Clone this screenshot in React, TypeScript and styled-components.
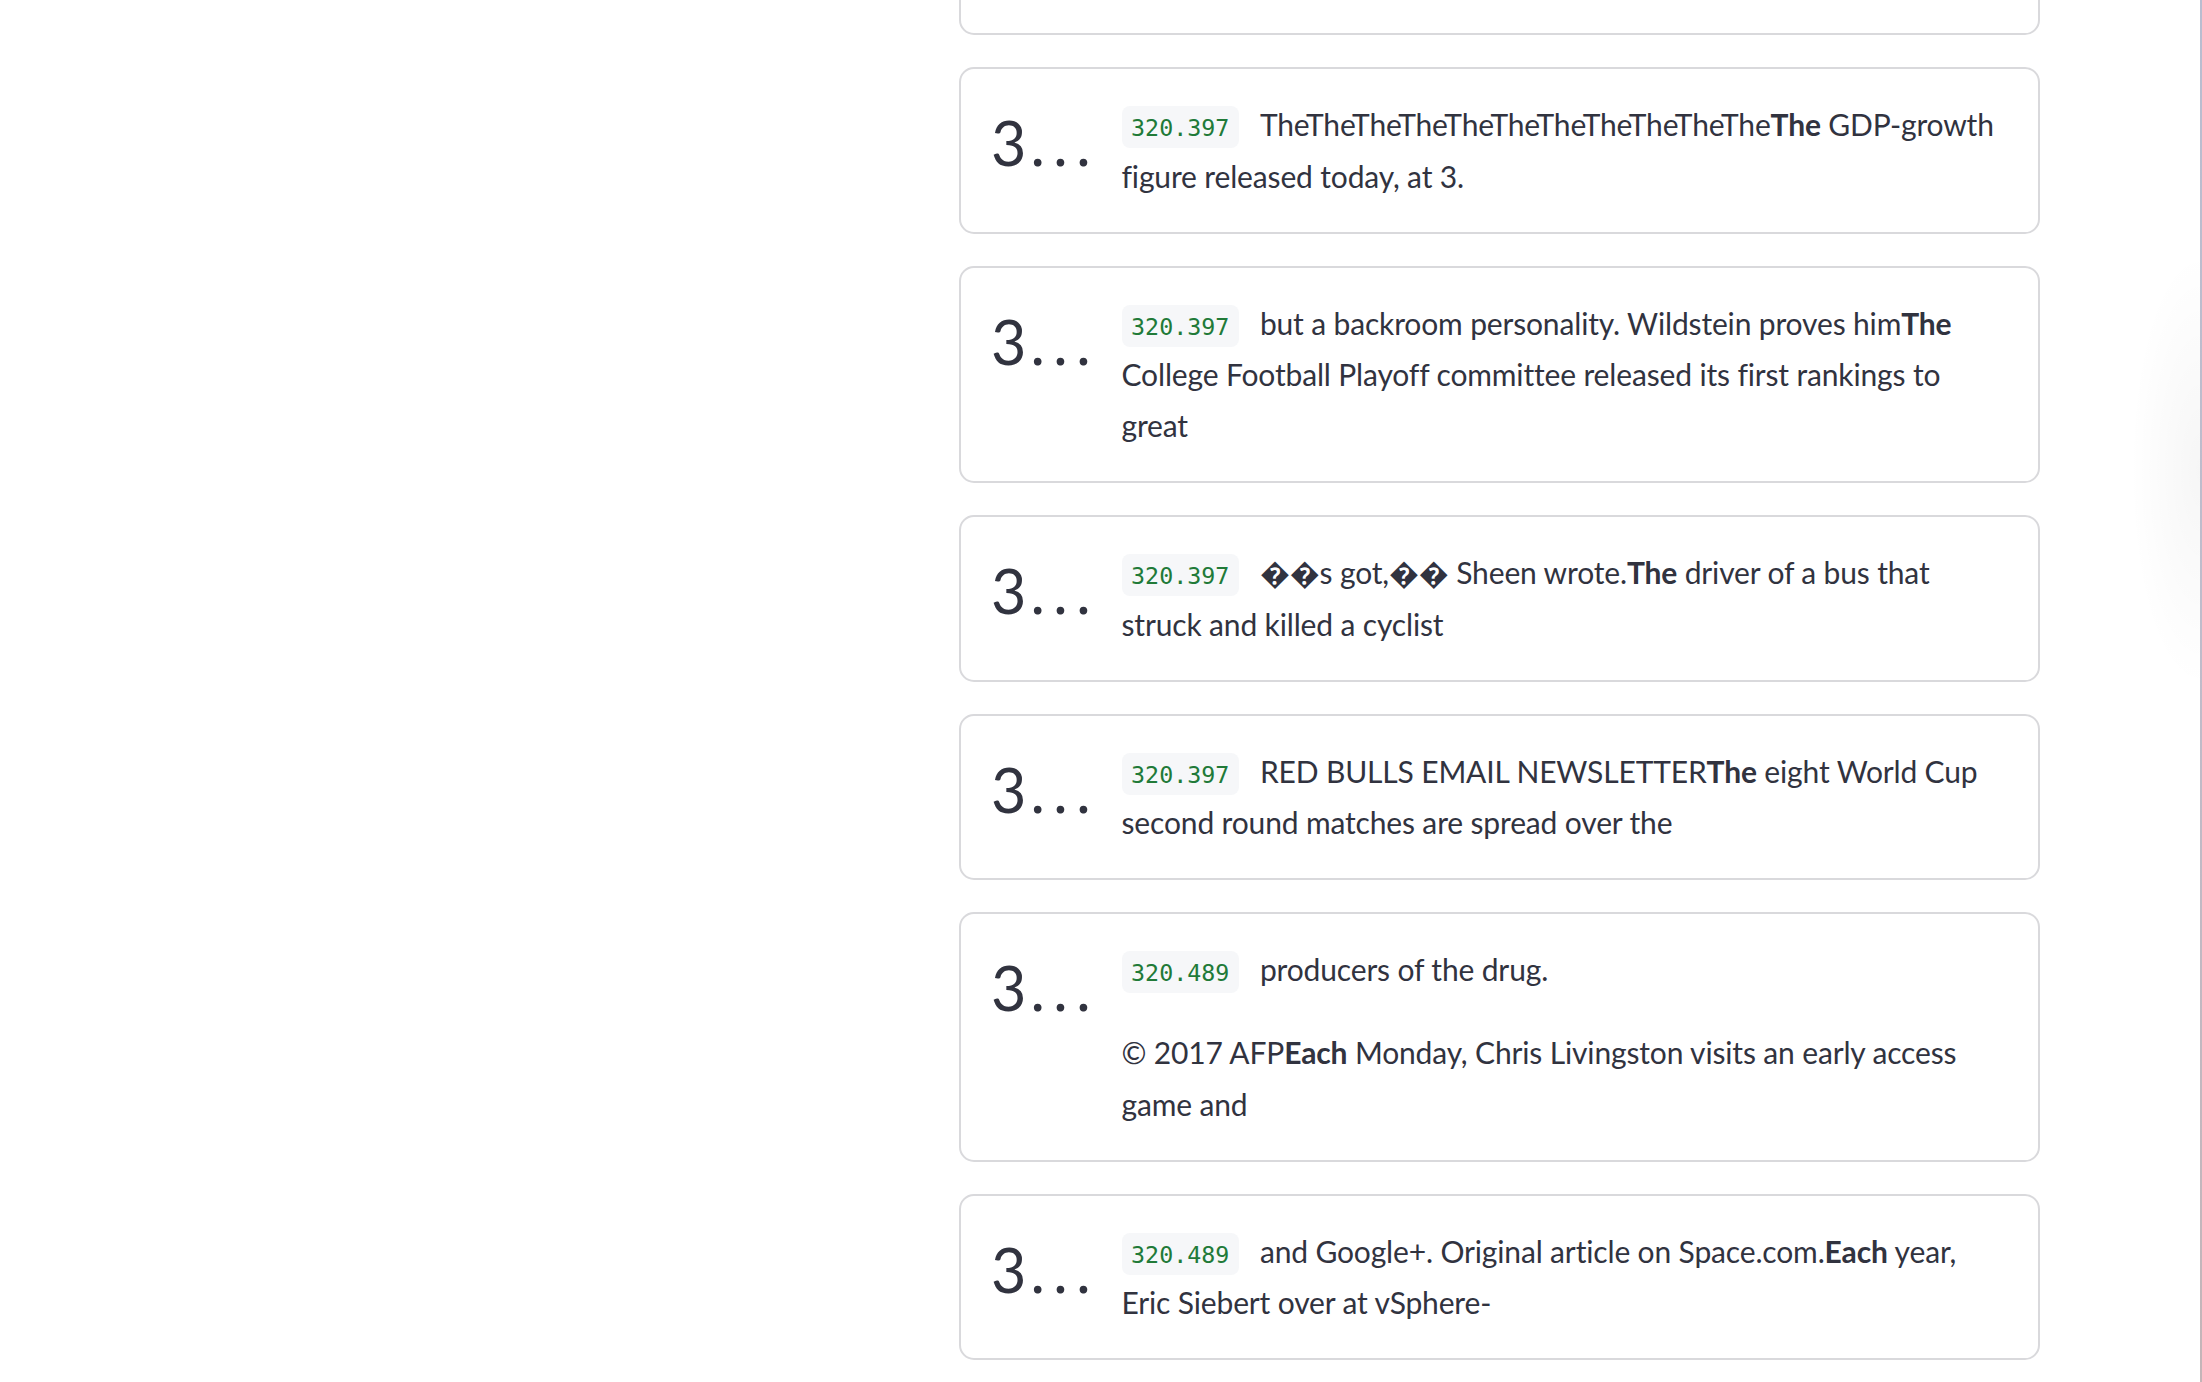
import React from "react";
import styled, { createGlobalStyle } from "styled-components";

const GlobalStyle = createGlobalStyle`
  html, body { margin: 0; padding: 0; background: #ffffff; }
  body {
    font-family: Lato, "Noto Sans", "DejaVu Sans", sans-serif;
    color: #31333f;
    overflow: hidden;
  }
`;

const Page = styled.div`
  display: grid;
  grid-template-columns: 959px 1081px 1fr 2px;
  height: 100vh;
  overflow: hidden;
`;

const Gutter = styled.div``;

const EdgeShade = styled.div`
  background: radial-gradient(
    ellipse 70px 220px at 100% 470px,
    rgba(0, 0, 0, 0.035),
    rgba(0, 0, 0, 0)
  );
`;

const ScrollEdge = styled.div`
  background: linear-gradient(180deg, #b9bdd0 0%, #bfbccb 45%, #c4b5b8 100%);
`;

const Feed = styled.div`
  display: flex;
  flex-direction: column;
  gap: 32px;
  margin-top: -131px;
`;

const Card = styled.section`
  border: 2px solid #d9d9dc;
  border-radius: 15px;
  padding: 30px;
  display: grid;
  grid-template-columns: 1fr 9fr;
  column-gap: 32px;
  background: #ffffff;
`;

const Score = styled.div`
  font-size: 61px;
  line-height: 73px;
  padding-top: 7px;
  white-space: nowrap;
  overflow: hidden;
  color: #31333f;
  min-width: 0;
`;

const Dots = styled.span`
  letter-spacing: 8.5px;
  margin-left: 4px;
`;

const Body = styled.div<{ $lines?: number }>`
  font-size: 30px;
  letter-spacing: -0.15px;
  line-height: 51.2px;
  min-width: 0;
  min-height: ${(p) => (p.$lines ? p.$lines * 51.2 : 0)}px;
`;

const Para = styled.p`
  margin: 0 0 32px;
  &:last-child {
    margin-bottom: 0;
  }
`;

const Stamp = styled.code`
  font-family: "DejaVu Sans Mono", "Liberation Mono", monospace;
  font-size: 23.3px;
  line-height: 1;
  letter-spacing: 0;
  color: #217a38;
  background: #f6f7f9;
  border-radius: 8px;
  padding: 8px 9.6px 7px;
  margin-right: 21px;
`;

const Strong = styled.strong`
  font-weight: 700;
`;

type Seg = { t: string; b?: boolean };
type Entry = { score: string; stamp: string; paras: Seg[][] };

const R = "\uFFFD";

const entries: Entry[] = [
  {
    score: "320.397",
    stamp: "320.397",
    paras: [
      [
        { t: "TheTheTheTheTheTheTheTheTheTheThe" },
        { t: "The", b: true },
        { t: " GDP-growth figure released today, at 3." },
      ],
    ],
  },
  {
    score: "320.397",
    stamp: "320.397",
    paras: [
      [
        { t: "but a backroom personality. Wildstein proves him" },
        { t: "The", b: true },
        { t: " College Football Playoff committee released its first rankings to great" },
      ],
    ],
  },
  {
    score: "320.397",
    stamp: "320.397",
    paras: [
      [
        { t: `${R}${R}s got,${R}${R} Sheen wrote.` },
        { t: "The", b: true },
        { t: " driver of a bus that struck and killed a cyclist" },
      ],
    ],
  },
  {
    score: "320.397",
    stamp: "320.397",
    paras: [
      [
        { t: "RED BULLS EMAIL NEWSLETTER" },
        { t: "The", b: true },
        { t: " eight World Cup second round matches are spread over the" },
      ],
    ],
  },
  {
    score: "320.489",
    stamp: "320.489",
    paras: [
      [{ t: "producers of the drug." }],
      [
        { t: "\u00A9 2017 AFP" },
        { t: "Each", b: true },
        { t: " Monday, Chris Livingston visits an early access game and" },
      ],
    ],
  },
  {
    score: "320.489",
    stamp: "320.489",
    paras: [
      [
        { t: "and Google+. Original article on Space.com." },
        { t: "Each", b: true },
        { t: " year, Eric Siebert over at vSphere-" },
      ],
    ],
  },
];

function ResultCard({ entry }: { entry: Entry }) {
  return (
    <Card>
      <Score title={entry.score}>
        {entry.score.charAt(0)}
        <Dots>...</Dots>
      </Score>
      <Body>
        {entry.paras.map((p, i) => (
          <Para key={i}>
            {i === 0 && <Stamp>{entry.stamp}</Stamp>}
            {p.map((s, j) => (s.b ? <Strong key={j}>{s.t}</Strong> : <React.Fragment key={j}>{s.t}</React.Fragment>))}
          </Para>
        ))}
      </Body>
    </Card>
  );
}

function ScrolledPastCard() {
  return (
    <Card>
      <Score />
      <Body $lines={2} />
    </Card>
  );
}

export default function App() {
  return (
    <>
      <GlobalStyle />
      <Page>
        <Gutter />
        <Feed>
          <ScrolledPastCard />
          {entries.map((e, i) => (
            <ResultCard key={i} entry={e} />
          ))}
        </Feed>
        <EdgeShade />
        <ScrollEdge />
      </Page>
    </>
  );
}
